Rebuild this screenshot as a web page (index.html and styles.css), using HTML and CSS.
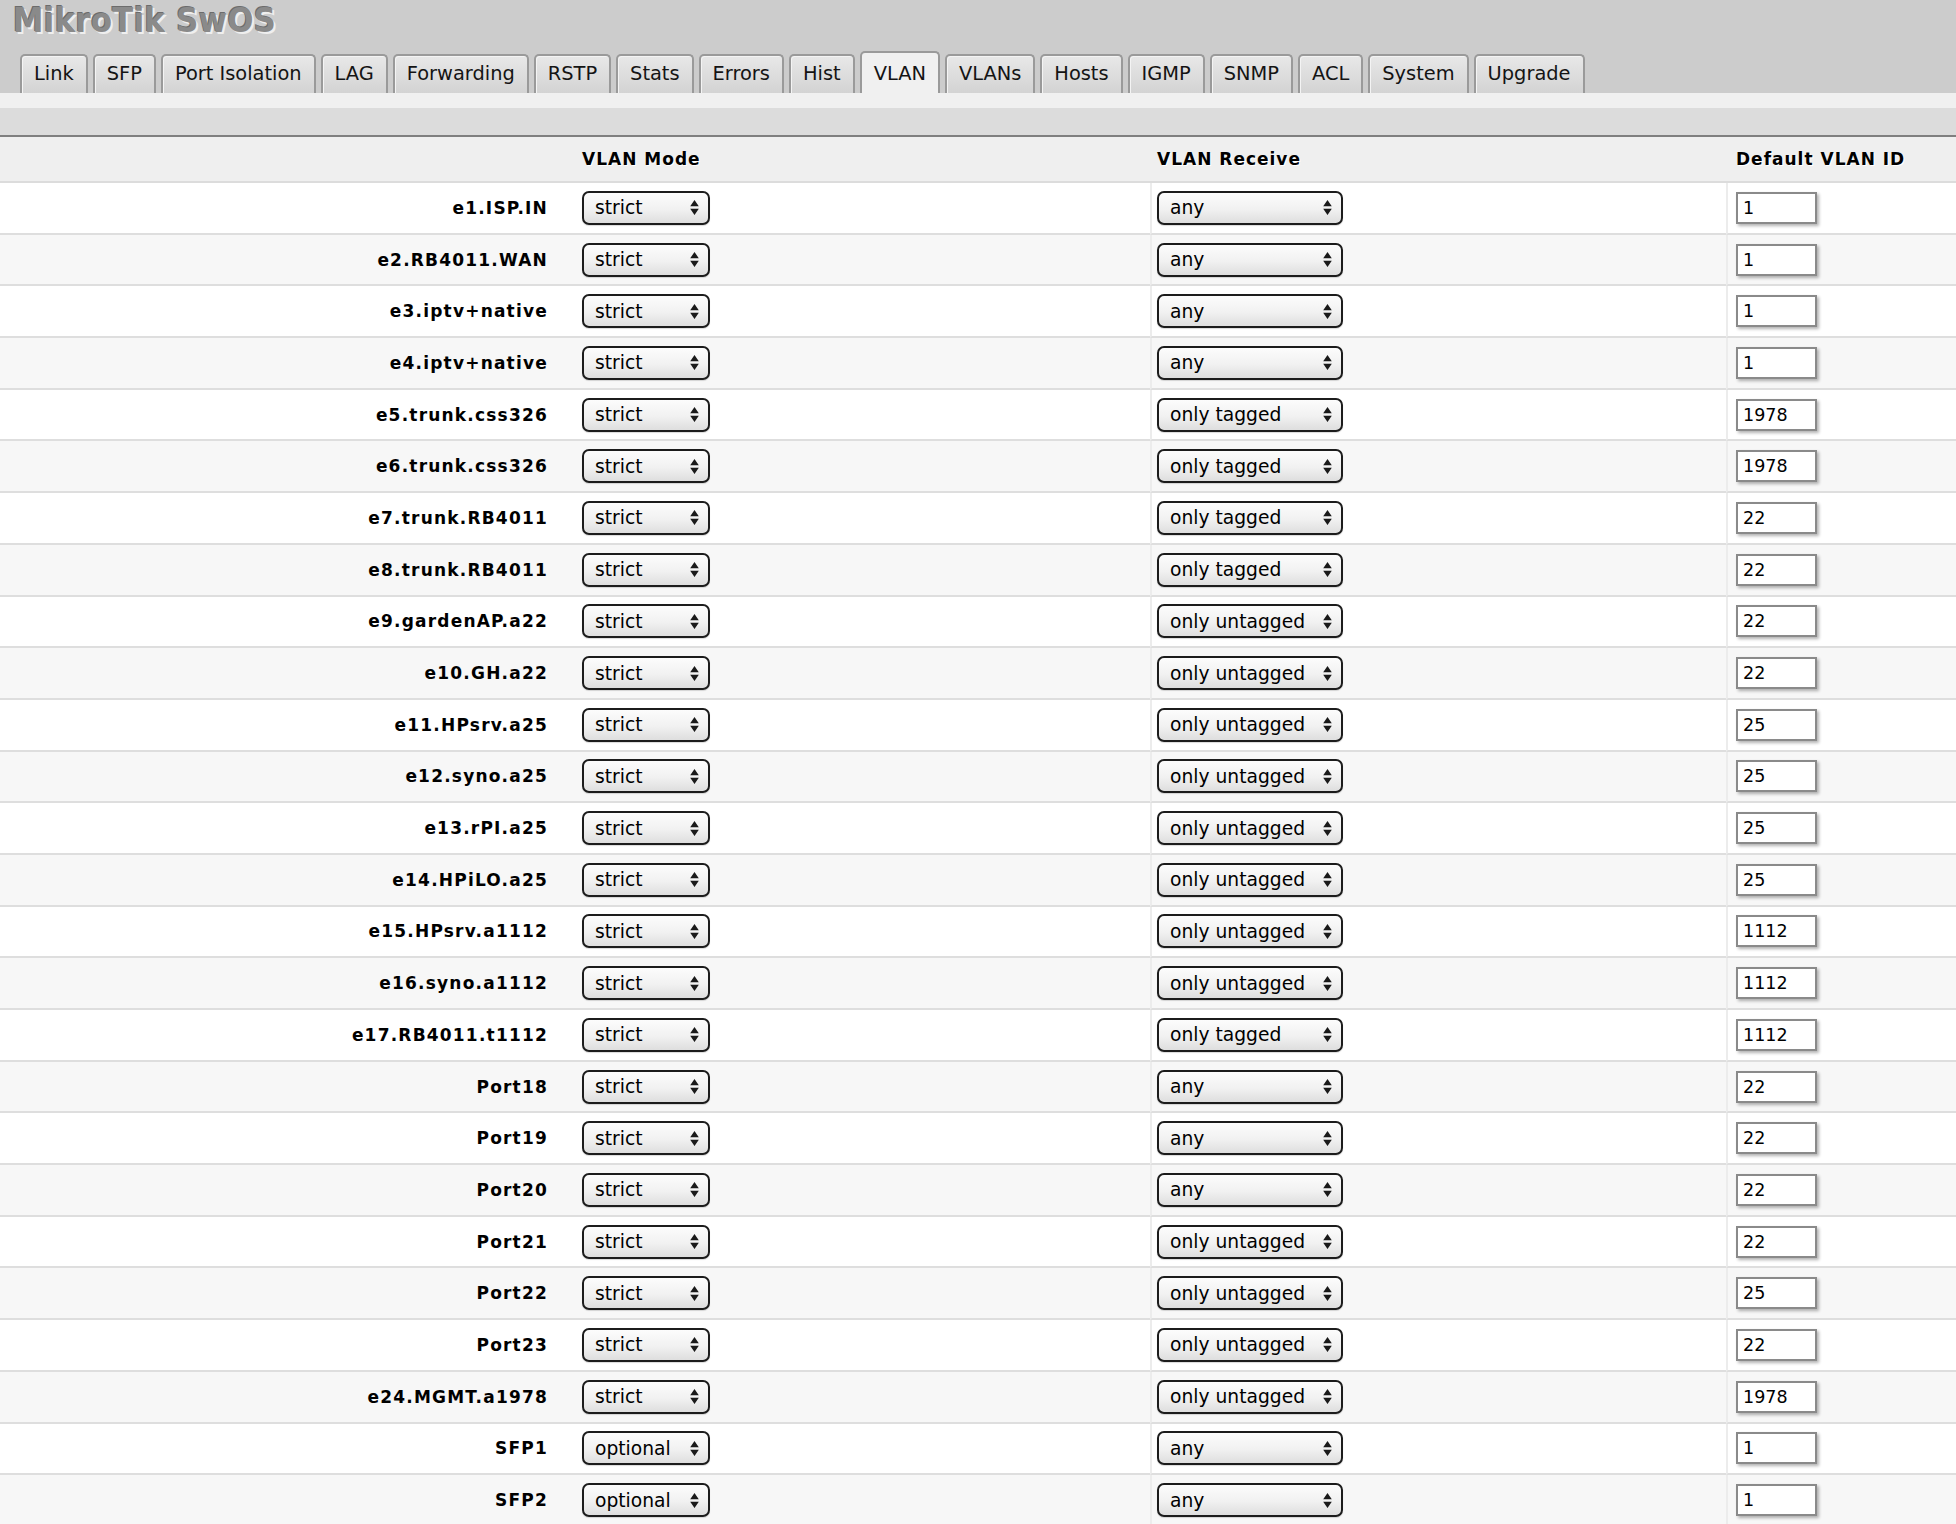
FILE: index.html
```html
<!DOCTYPE html>
<html>
<head>
<meta charset="utf-8">
<title>MikroTik SwOS</title>
<link rel="stylesheet" href="styles.css">
</head>
<body>
<div class="top">
  <div class="title">MikroTik SwOS</div>
  <nav class="tabs">
    <span class="tab">Link</span>
    <span class="tab">SFP</span>
    <span class="tab">Port Isolation</span>
    <span class="tab">LAG</span>
    <span class="tab">Forwarding</span>
    <span class="tab">RSTP</span>
    <span class="tab">Stats</span>
    <span class="tab">Errors</span>
    <span class="tab">Hist</span>
    <span class="tab active">VLAN</span>
    <span class="tab">VLANs</span>
    <span class="tab">Hosts</span>
    <span class="tab">IGMP</span>
    <span class="tab">SNMP</span>
    <span class="tab">ACL</span>
    <span class="tab">System</span>
    <span class="tab">Upgrade</span>
  </nav>
</div>
<div class="band1"></div>
<div class="band2"></div>
<table class="grid">
  <colgroup>
    <col class="c1"><col class="c2"><col class="c3"><col class="c4">
  </colgroup>
  <thead>
    <tr><th class="lbl"></th><th class="hm">VLAN Mode</th><th class="hr">VLAN Receive</th><th class="hd">Default VLAN ID</th></tr>
  </thead>
  <tbody id="rows"></tbody>
</table>
<script src="app.js"></script>
</body>
</html>
```

FILE: app.js
```js
var data = [
  ["e1.ISP.IN","strict","any","1"],
  ["e2.RB4011.WAN","strict","any","1"],
  ["e3.iptv+native","strict","any","1"],
  ["e4.iptv+native","strict","any","1"],
  ["e5.trunk.css326","strict","only tagged","1978"],
  ["e6.trunk.css326","strict","only tagged","1978"],
  ["e7.trunk.RB4011","strict","only tagged","22"],
  ["e8.trunk.RB4011","strict","only tagged","22"],
  ["e9.gardenAP.a22","strict","only untagged","22"],
  ["e10.GH.a22","strict","only untagged","22"],
  ["e11.HPsrv.a25","strict","only untagged","25"],
  ["e12.syno.a25","strict","only untagged","25"],
  ["e13.rPI.a25","strict","only untagged","25"],
  ["e14.HPiLO.a25","strict","only untagged","25"],
  ["e15.HPsrv.a1112","strict","only untagged","1112"],
  ["e16.syno.a1112","strict","only untagged","1112"],
  ["e17.RB4011.t1112","strict","only tagged","1112"],
  ["Port18","strict","any","22"],
  ["Port19","strict","any","22"],
  ["Port20","strict","any","22"],
  ["Port21","strict","only untagged","22"],
  ["Port22","strict","only untagged","25"],
  ["Port23","strict","only untagged","22"],
  ["e24.MGMT.a1978","strict","only untagged","1978"],
  ["SFP1","optional","any","1"],
  ["SFP2","optional","any","1"]
];
var arrows = '<svg class="arr" width="9" height="15" viewBox="0 0 9 15"><path d="M4.5 0L8.8 6.2H0.2Z M0.2 8.8H8.8L4.5 15Z" fill="#1a1a1a"/></svg>';
function sel(cls, value, opts) {
  var h = '<div class="sel ' + cls + '"><select>';
  opts.forEach(function (o) {
    h += '<option' + (o === value ? ' selected' : '') + '>' + o + '</option>';
  });
  return h + '</select>' + arrows + '</div>';
}
var tb = document.getElementById('rows');
var html = '';
data.forEach(function (r) {
  html += '<tr><td class="lbl">' + r[0] + '</td>' +
    '<td class="cm">' + sel('mode', r[1], ['disabled','optional','enabled','strict']) + '</td>' +
    '<td class="cr">' + sel('recv', r[2], ['any','only tagged','only untagged']) + '</td>' +
    '<td class="cd"><input class="vid" type="text" value="' + r[3] + '"></td></tr>';
});
tb.innerHTML = html;
```

FILE: styles.css
```css
html, body {
  margin: 0;
  padding: 0;
  background: #ffffff;
}
body {
  font-family: "DejaVu Sans", Verdana, sans-serif;
  color: #000;
}
.top {
  background: #cccccc;
  height: 93px;
}
.title {
  font-family: "DejaVu Sans Condensed", "DejaVu Sans", sans-serif;
  font-weight: bold;
  font-size: 34px;
  line-height: 41px;
  letter-spacing: 0.4px;
  padding-left: 13px;
  color: #8a8a8a;
  text-shadow: -1px -1px 0 #6c6c6c, 2px 2px 0 #efefef;
}
.tabs {
  display: flex;
  align-items: flex-end;
  gap: 5px;
  height: 52px;
  padding-left: 20px;
}
.tab {
  display: block;
  border: 2px solid #9a9a9a;
  border-bottom: none;
  border-radius: 5px 5px 0 0;
  padding: 0 12px 2px;
  line-height: 35px;
  font-size: 19.4px;
  color: #141414;
  background: linear-gradient(to bottom, #e8e8e8, #d3d3d3);
  box-shadow: inset 1px 1px 0 #f4f4f4;
}
.tab.active {
  background: #f0f0f0;
  padding-top: 3px;
  box-shadow: none;
}
.band1 {
  height: 15px;
  background: #f0f0f0;
}
.band2 {
  height: 27px;
  background: #dcdcdc;
  border-bottom: 2px solid #7f7f7f;
}
.grid {
  width: 1956px;
  table-layout: fixed;
  border-collapse: separate;
  border-spacing: 0;
}
.c1 { width: 574px; }
.c2 { width: 576px; }
.c3 { width: 576px; }
.c4 { width: 230px; }
.grid th {
  height: 44px;
  padding: 0;
  background: #efefef;
  border-bottom: 2px solid #dcdcdc;
  font-size: 17px;
  font-weight: bold;
  letter-spacing: 1px;
  text-align: left;
  vertical-align: middle;
  text-shadow: 1px 1px 0 #ffffff;
}
.grid th.hm { padding-left: 8px; }
.grid th.hr { padding-left: 7px; }
.grid th.hd { padding-left: 10px; }
.grid td {
  height: 49.7px;
  padding: 0;
  border-bottom: 2px solid #dedede;
  vertical-align: middle;
}
.grid tbody tr:nth-child(even) td {
  background: #f7f7f7;
}
.grid td.lbl {
  text-align: right;
  padding-right: 26px;
  font-size: 17px;
  font-weight: bold;
  letter-spacing: 1.2px;
}
.grid td.cm { padding-left: 8px; }
.grid td.cr {
  padding-left: 5px;
  border-left: 2px solid #ececec;
}
.grid td.cd {
  padding-left: 8px;
  border-left: 2px solid #ececec;
}
.sel {
  position: relative;
  height: 34px;
}
.sel.mode { width: 128px; }
.sel.recv { width: 186px; }
.sel select {
  -webkit-appearance: none;
  appearance: none;
  display: block;
  box-sizing: border-box;
  width: 100%;
  height: 34px;
  margin: 0;
  padding: 0 0 0 11px;
  border: 2px solid #1c1c1c;
  border-radius: 7px;
  background: linear-gradient(to bottom, #fcfcfc 0%, #f1f1f1 55%, #dedede 100%);
  box-shadow: 0 1px 1px rgba(0, 0, 0, 0.15);
  font-family: "DejaVu Sans", Verdana, sans-serif;
  font-size: 18.7px;
  color: #000;
  outline: none;
}
.sel .arr {
  position: absolute;
  right: 11px;
  top: 9.5px;
  pointer-events: none;
}
.vid {
  display: block;
  box-sizing: border-box;
  width: 81px;
  height: 32px;
  margin: 0;
  padding: 0 0 0 5px;
  border: 2px solid #8a8a8a;
  background: #ffffff;
  box-shadow: 2px 2px 3px rgba(0, 0, 0, 0.3);
  font-family: "DejaVu Sans", Verdana, sans-serif;
  font-size: 17.5px;
  color: #000;
  outline: none;
}
```
